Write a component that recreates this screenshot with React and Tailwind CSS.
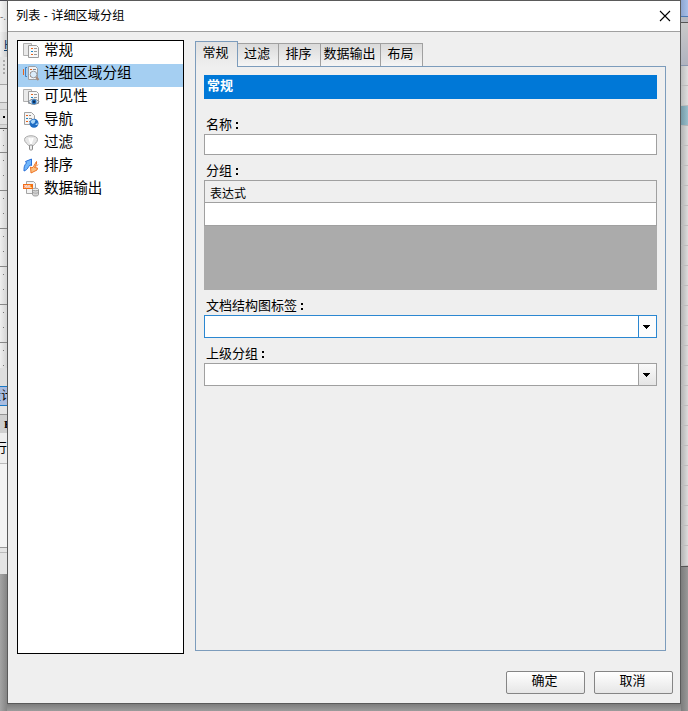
import { useState } from "react";

// two sheets, used as the base of several icons
function Sheets() {
  return (
    <>
      <path d="M.5 1.500h8v12h-8z" fill="#e9e9e9" stroke="#b0b0b0" />
      <path d="M5.500 3.500h8l2 2v10h-10z" fill="#f8f8f8" stroke="#9c9c9c" />
      <path d="M8 6.500h2M8 12.500h2" stroke="#e8641c" />
      <path d="M11 6.500h3M11 9.500h3M11 12.500h3" stroke="#9a9a9a" />
      <path d="M8 9.500h2" stroke="#1d87c4" />
    </>
  );
}

function Icon({ name }) {
  return (
    <svg width="17" height="17" viewBox="0 0 17 17" fill="none" className="-mt-[4px] shrink-0">
      {name === "general" && <Sheets />}
      {name === "detail" && (
        <>
          <path d="M.5 4v6" stroke="#e8641c" />
          <path d="M4 2.500H2.500v9H4" stroke="#3f7fc4" />
          <path d="M5.500 1.500h7l2 2v11h-9z" fill="#f0f2f5" stroke="#9c9fa4" />
          <path d="M7 4.500h2M7 7.500h1M7 11.500h1" stroke="#e8641c" />
          <path d="M10 4.500h3" stroke="#7d8894" />
          <circle cx="10.500" cy="9.500" r="3.300" fill="#dcecfa" stroke="#999da3" />
          <path d="m13 12 2.500 3" stroke="#a58a7c" strokeWidth="2" />
        </>
      )}
      {name === "visibility" && (
        <>
          <Sheets />
          <path d="M5.500 13.800c2.500-3.500 8-3.500 10.500 0-2.500 3.500-8 3.500-10.500 0z" fill="#dce9f6" stroke="#77818c" />
          <circle cx="11" cy="13.800" r="2.500" fill="#2370bd" />
          <circle cx="11" cy="13.800" r="1.300" fill="#102b50" />
        </>
      )}
      {name === "navigation" && (
        <>
          <path d="M1.500 1.500h7l3 3v9h-10z" fill="#f5f5f5" stroke="#a2a2a2" />
          <path d="M3 4.500h2M3 10.500h2" stroke="#e8641c" />
          <path d="M3 7.500h2" stroke="#1d87c4" />
          <path d="M6 4.500h2M6 7.500h3M6 10.500h1" stroke="#8c8c8c" />
          <circle cx="11" cy="12.200" r="4.500" fill="#1f6dc4" />
          <path d="M7.500 11c1-3 4-3 5-2l-1 3-2 1zM12 14l2.500-2.500V14z" fill="#a9d5f7" />
        </>
      )}
      {name === "filter" && (
        <>
          <path d="M1.500 5.500c0-5 13-5 13 0 0 3-3 4-4 6h-5c-1-2-4-3-4-6z" fill="#e6e6e6" stroke="#aaa" />
          <path d="M6 4l2 6 2-6" fill="#f8f8f8" stroke="#fff" strokeWidth="1.500" />
          <rect x="6.500" y="11" width="3" height="5" rx="1" fill="#eee" stroke="#8c8c8c" />
        </>
      )}
      {name === "sort" && (
        <>
          <path d="M1 14C.8 10 1.500 8 3.500 6L2.500 4.500l6-2.500v6.500L7 8c-2 2-2 4.500-6 6z" fill="#70b6fb" stroke="#286fd7" />
          <path d="M13.500 4.500c.5 2-.5 4-2 6L14.500 11 14 13l-6 3-.5-6 1.500 1c2-1.500 2.500-3.500 4.500-6.500z" fill="#fbc07f" stroke="#ef7425" />
          <path d="M13 9.500l2-2" stroke="#ef7425" />
        </>
      )}
      {name === "output" && (
        <>
          <path d="M3.500 1.500h7l2 2v10h-9z" fill="#f3f3f3" stroke="#a4a4a4" />
          <path d="M0 4h10v5H0z" fill="#f36d13" />
          <text x="1" y="8.100" fontSize="4.200" fontWeight="700" textLength="8" fill="#fff" fontFamily="Liberation Sans, sans-serif">XML</text>
          <path d="M9.500 9.500v5c0 2 6 2 6 0v-5" fill="#d5d5d5" stroke="#989898" />
          <ellipse cx="12.500" cy="9.500" rx="3" ry="1.300" fill="#eee" stroke="#a0a0a0" />
          <path d="M10 12.500c2 1 4 1 5 0" stroke="#aaa" />
        </>
      )}
    </svg>
  );
}

const pages = [
  { icon: "general", label: "常规" },
  { icon: "detail", label: "详细区域分组" },
  { icon: "visibility", label: "可见性" },
  { icon: "navigation", label: "导航" },
  { icon: "filter", label: "过滤" },
  { icon: "sort", label: "排序" },
  { icon: "output", label: "数据输出" },
];

const tabs = [
  { label: "常规", width: "w-[43px]" },
  { label: "过滤", width: "w-[41px]" },
  { label: "排序", width: "w-[42px]" },
  { label: "数据输出", width: "w-[60px]" },
  { label: "布局", width: "w-[42px]" },
];

function Field({ label, className }) {
  return (
    <div className={`flex w-[200px] items-center pl-[2px] text-[13px] leading-none ${className}`}>
      {label}
      <span className="flex w-[13px] flex-col items-start gap-[3px] pl-[4px] pt-[2px]">
        <i className="size-[2px] bg-black" />
        <i className="size-[2px] bg-black" />
      </span>
    </div>
  );
}

function Combo({ active }) {
  const border = active ? "border-[#2b87d1]" : "border-[#a0a0a0]";
  return (
    <div className={`flex h-[23px] border bg-white ${border}`}>
      <div className="flex-1" />
      <button
        className={`flex w-[18px] items-center justify-center border-l pr-px ${border} ${active ? "bg-[#fcfcfc]" : "bg-linear-to-b from-[#fafafa] to-[#e5e5e5]"}`}
      >
        <svg width="8" height="4" viewBox="0 0 8 4" shapeRendering="crispEdges">
          <path d="M0 0h7v1H6v1H5v1H4v1H3V3H2V2H1V1H0z" />
        </svg>
      </button>
    </div>
  );
}

// edge of the designer window to the left of the dialog
function DesignerLeft() {
  return (
    <div className="flex h-[711px] w-[7px] flex-col overflow-hidden whitespace-nowrap bg-[#a0a0a0]">
      <div className="h-px shrink-0 bg-[#4a4a52]" />
      <div className="flex h-[31px] shrink-0 items-center bg-linear-to-r from-[#f4f4f4] to-[#dcdcdc] text-[10px] text-[#777]">-.</div>
      <div className="flex h-[25px] shrink-0 items-center overflow-hidden bg-linear-to-r from-[#efefef] to-[#cfcfcf] pl-[4px] text-[12px] text-[#12406b] underline">H</div>
      <div className="flex h-[27px] shrink-0 flex-col items-center justify-start gap-[2px] bg-[#e2e2e2] pt-[3px]">
        <i className="size-[2px] bg-[#aaa]" />
        <i className="size-[2px] bg-[#aaa]" />
        <i className="size-[2px] bg-[#aaa]" />
        <i className="size-[2px] bg-[#aaa]" />
      </div>
      <div className="h-[19px] shrink-0 border-y border-[#a5a5a5] bg-[#e7e7e7]" />
      <div className="h-[7px] shrink-0 border-b border-[#bdbdbd] bg-[#dcdcdc]" />
      <div className="flex h-[15px] shrink-0 items-center justify-end border-b border-[#bdbdbd] bg-[#e2e2e2] pr-[2px]">
        <i className="size-[2px] bg-black" />
      </div>
      <div className="h-[4px] shrink-0 border-b border-[#555] bg-[#d8d8d8]" />
      <div className="flex h-[24px] shrink-0 flex-col items-center gap-[14px] border-b border-[#888] bg-linear-to-r from-[#efefef] to-[#d4d4d4] pt-px">
        <i className="size-px bg-[#777]" />
        <i className="size-px bg-[#777]" />
      </div>
      {[1, 2, 3, 4, 5].map((n) => (
        <div key={n} className="flex h-[38px] shrink-0 flex-col items-center gap-[14px] border-b border-[#888] bg-linear-to-r from-[#efefef] to-[#d4d4d4] pt-[7px]">
          <i className="size-px bg-[#777]" />
          <i className="size-px bg-[#777]" />
        </div>
      ))}
      <div className="flex h-[25px] shrink-0 flex-col items-center gap-[14px] bg-linear-to-r from-[#efefef] to-[#d4d4d4] pt-[7px]">
        <i className="size-px bg-[#777]" />
        <i className="size-px bg-[#777]" />
      </div>
      <div className="h-[18px] shrink-0 bg-[#dedede]" />
      <div className="flex h-[20px] shrink-0 items-center justify-end overflow-hidden border-y border-[#1979c6] bg-[#a9bcdf] text-[12px]">
        <span className="-mr-[6px]">设计</span>
      </div>
      <div className="h-[8px] shrink-0 bg-[#e3e3e3]" />
      <div className="flex h-[19px] shrink-0 items-center overflow-hidden border-t border-[#949494] bg-[#cfcfcf] pl-[4px] font-['Liberation_Serif',serif] text-[11px] font-bold">E</div>
      <div className="flex h-[31px] shrink-0 items-center justify-end overflow-hidden border-b border-[#bbb] bg-[#eee] text-[13px]">行</div>
      <div className="h-[84px] shrink-0 border-b border-[#999] bg-[#f3f3f3]" />
      <div className="h-[5px] shrink-0 border-b border-[#bbb] bg-[#e4e4e4]" />
      <div className="h-[21px] shrink-0 bg-[#e4e4e4]" />
      <div className="flex-1 bg-linear-to-r from-[#a4a4a4] to-[#858585]" />
    </div>
  );
}

// edge of the property grid to the right of the dialog
function DesignerRight() {
  const rows = Array.from({ length: 22 }, (_, i) => i);
  return (
    <div className="flex h-[711px] w-[7px] flex-col overflow-hidden bg-linear-to-r from-[#7c7c7c] to-[#999]">
      <div className="h-[17px] shrink-0 border-b border-[#4a78b5] bg-linear-to-r from-[#8da5d0] to-[#a7c0ea]" />
      <div className="h-[6px] shrink-0 border-b border-[#555] bg-[#b4b8c0]" />
      <div className="h-[43px] shrink-0 border-b border-[#8795ad] bg-linear-to-b from-[#c9c9c9] to-[#b0b3bf]" />
      <div className="h-[20px] shrink-0 border-b border-[#bbb] bg-linear-to-r from-[#bdbdbd] to-[#dedede]" />
      <div className="h-[20px] shrink-0 border-b border-[#bbb] bg-linear-to-r from-[#bdbdbd] to-[#dedede]" />
      <div className="h-[20px] shrink-0 border-b border-[#b4b4b4] bg-linear-to-r from-[#7599a6] to-[#98bfcc]" />
      {rows.map((n) => (
        <div key={n} className="h-[20px] shrink-0 border-b border-[#bdbdbd] bg-linear-to-r from-[#b3b3b3] to-[#dcdcdc]" />
      ))}
      <div className="h-px shrink-0 bg-[#555]" />
    </div>
  );
}

export default function App() {
  const [page, setPage] = useState(1);
  const [tab, setTab] = useState(0);

  return (
    <div className="flex h-[711px] w-[688px] overflow-hidden font-['Liberation_Sans','Noto_Sans_CJK_SC',sans-serif] text-black">
      <DesignerLeft />

      <div className="flex h-[711px] w-[674px] flex-col bg-linear-to-b from-[#7c7c7c] from-[704px] to-[#9c9c9c]">
        <div className="flex h-[704px] flex-col border border-[#5a5a5a] bg-[#efefef]">
          {/* title bar */}
          <div className="flex h-[31px] shrink-0 items-center justify-between border-b border-[#a0a0a0] bg-white pl-[8px] pr-[9px]">
            <span className="pt-px text-[12.200px] leading-none">列表 - 详细区域分组</span>
            <svg width="12" height="12" viewBox="0 0 12 12" stroke="#000" strokeWidth="1.100" className="-mt-px">
              <path d="M1 1l10 10M11 1L1 11" />
            </svg>
          </div>

          <div className="flex pl-[9px] pt-[8px]">
            {/* page list */}
            <ul className="h-[614px] w-[167px] border border-black bg-white">
              {pages.map((p, i) => (
                <li
                  key={p.label}
                  onClick={() => setPage(i)}
                  className={`flex h-[23px] items-center gap-[4px] pl-[5px] text-[14.600px] leading-none ${i === page ? "bg-[#a5cff2]" : ""}`}
                >
                  <Icon name={p.icon} />
                  <span className="-mt-[5px] whitespace-nowrap">{p.label}</span>
                </li>
              ))}
            </ul>

            <div className="ml-[11px] mt-px w-[471px]">
              <div className="flex h-[25px] items-end">
                {tabs.map((t, i) => (
                  <button
                    key={t.label}
                    onClick={() => setTab(i)}
                    className={`flex justify-center whitespace-nowrap pr-[2px] text-[13px] leading-none ${t.width} ${
                      i === tab
                        ? "-mb-px h-[26px] border-x border-t border-[#7c9cbc] bg-linear-to-b from-[#e1e1e1] to-[#efefef] pt-[4px]"
                        : "h-[23px] border-r border-t border-[#a0a0a0] bg-linear-to-b from-[#dadada] to-[#f5f5f5] pt-[3px]"
                    }`}
                  >
                    {t.label}
                  </button>
                ))}
              </div>

              <div className="h-[585px] border border-[#7c9cbc] px-[8px] pt-[8px]">
                <div className="h-[24px] bg-[#0078d7] pl-[3px] pt-[4px] text-[13px] font-bold leading-none text-white">常规</div>
                <Field label="名称" className="mt-[15px] h-[20px]" />
                <input className="block h-[21px] w-full border border-[#a0a0a0] bg-white" />

                <Field label="分组" className="mt-[5px] h-[20px]" />
                <div className="h-[110px] bg-[#ababab]">
                  <div className="h-[23px] border border-[#a0a0a0] bg-[#efefef] pl-[5px] pt-[7px] text-[12px] leading-none">表达式</div>
                  <div className="h-[23px] border-x border-b border-[#a0a0a0] bg-white" />
                </div>

                <Field label="文档结构图标签" className="mt-[5px] h-[20px]" />
                <Combo active />
                <Field label="上级分组" className="mt-[5px] h-[20px]" />
                <Combo />
              </div>
            </div>
          </div>

          {/* dialog buttons */}
          <div className="mt-[17px] flex justify-end gap-[9px] pr-[7px] text-[13px] leading-none">
            {["确定", "取消"].map((b) => (
              <button key={b} className="h-[23px] w-[79px] rounded-[2px] border border-[#858585] bg-linear-to-b from-white to-[#e6e6e6] pb-[4px] pr-[2px]">
                {b}
              </button>
            ))}
          </div>
        </div>
      </div>

      <DesignerRight />
    </div>
  );
}
